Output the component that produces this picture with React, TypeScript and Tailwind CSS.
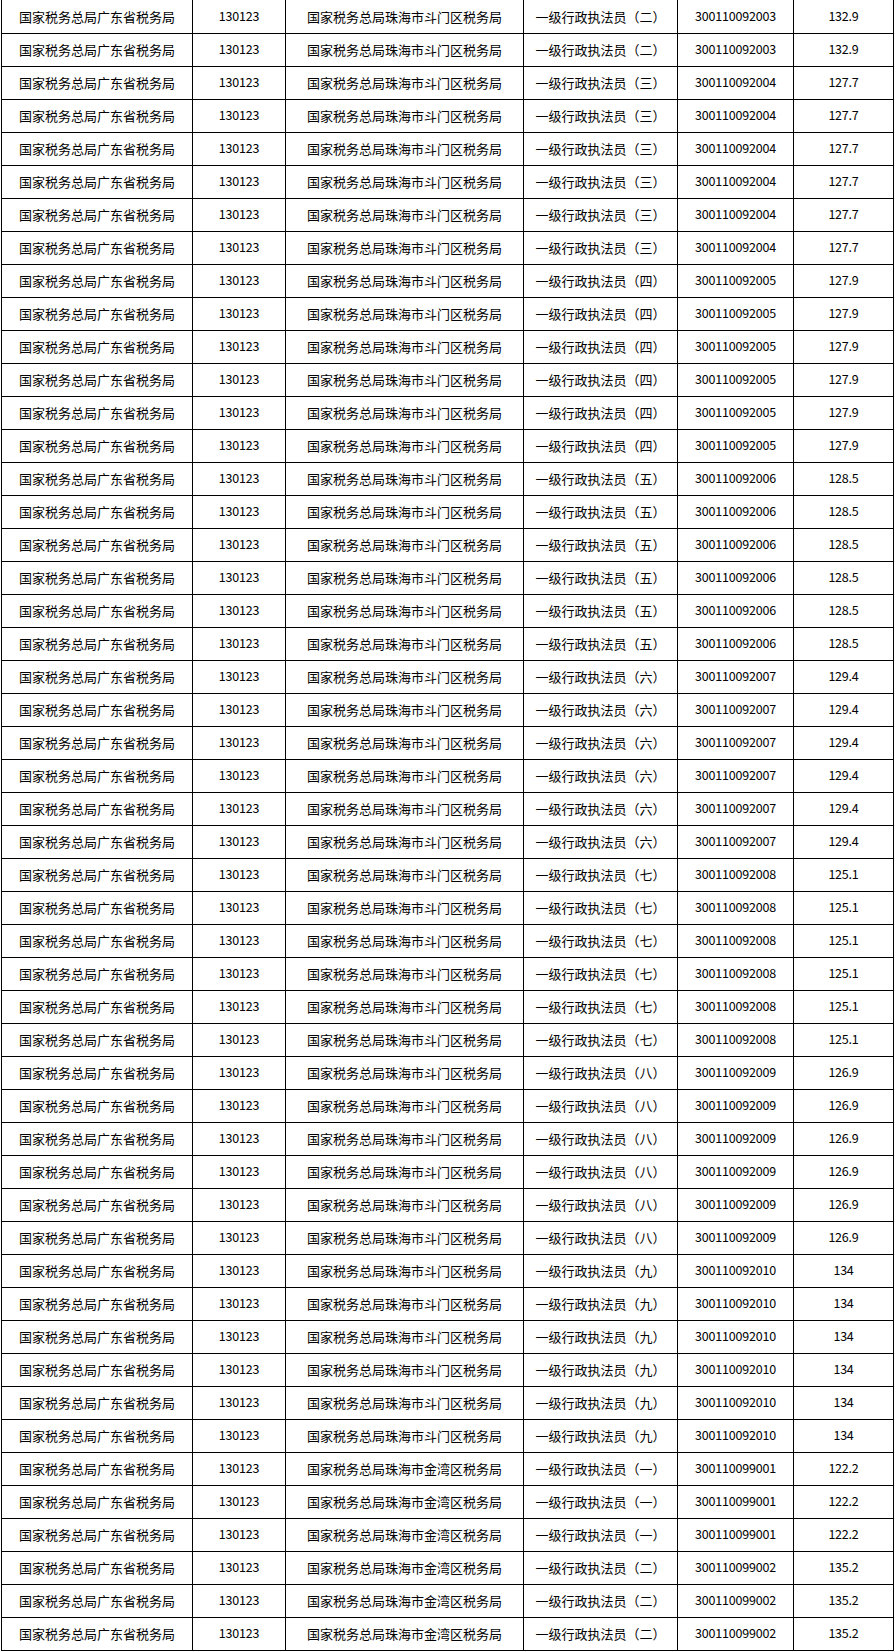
const ROWS: [string, string, string, string][] = []

function add(unit: string, post: string, code: string, score: string, n: number) {
  for (let i = 0; i < n; i++) ROWS.push([unit, post, code, score])
}

const DM = '国家税务总局珠海市斗门区税务局'
const JW = '国家税务总局珠海市金湾区税务局'

add(DM, '一级行政执法员（二）', '300110092003', '132.9', 2)
add(DM, '一级行政执法员（三）', '300110092004', '127.7', 6)
add(DM, '一级行政执法员（四）', '300110092005', '127.9', 6)
add(DM, '一级行政执法员（五）', '300110092006', '128.5', 6)
add(DM, '一级行政执法员（六）', '300110092007', '129.4', 6)
add(DM, '一级行政执法员（七）', '300110092008', '125.1', 6)
add(DM, '一级行政执法员（八）', '300110092009', '126.9', 6)
add(DM, '一级行政执法员（九）', '300110092010', '134', 6)
add(JW, '一级行政执法员（一）', '300110099001', '122.2', 3)
add(JW, '一级行政执法员（二）', '300110099002', '135.2', 3)

const cjk = "font-['Noto_Sans_CJK_SC',sans-serif] text-[13px]"
const num = "font-['Noto_Sans_CJK_SC',sans-serif] text-[12.5px] tracking-[-0.2px]"

export default function App() {
  return (
    <div className="bg-white pl-px">
      <table className="table-fixed border-collapse text-black">
        <colgroup>
          <col className="w-[191px]" />
          <col className="w-[93px]" />
          <col className="w-[238px]" />
          <col className="w-[154px]" />
          <col className="w-[116px]" />
          <col className="w-[100px]" />
        </colgroup>
        <tbody>
          {ROWS.map((r, i) => (
            <tr key={i} className="h-[33px]">
              <td className={`border border-t-0 border-black p-0 text-center leading-none ${cjk}`}>国家税务总局广东省税务局</td>
              <td className={`border border-t-0 border-black p-0 text-center leading-none ${num}`}>130123</td>
              <td className={`border border-t-0 border-black p-0 text-center leading-none ${cjk}`}>{r[0]}</td>
              <td className={`border border-t-0 border-black p-0 text-center leading-none ${cjk}`}>{r[1]}</td>
              <td className={`border border-t-0 border-black p-0 text-center leading-none ${num}`}>{r[2]}</td>
              <td className={`border border-t-0 border-black p-0 text-center leading-none ${num}`}>{r[3]}</td>
            </tr>
          ))}
        </tbody>
      </table>
    </div>
  )
}
